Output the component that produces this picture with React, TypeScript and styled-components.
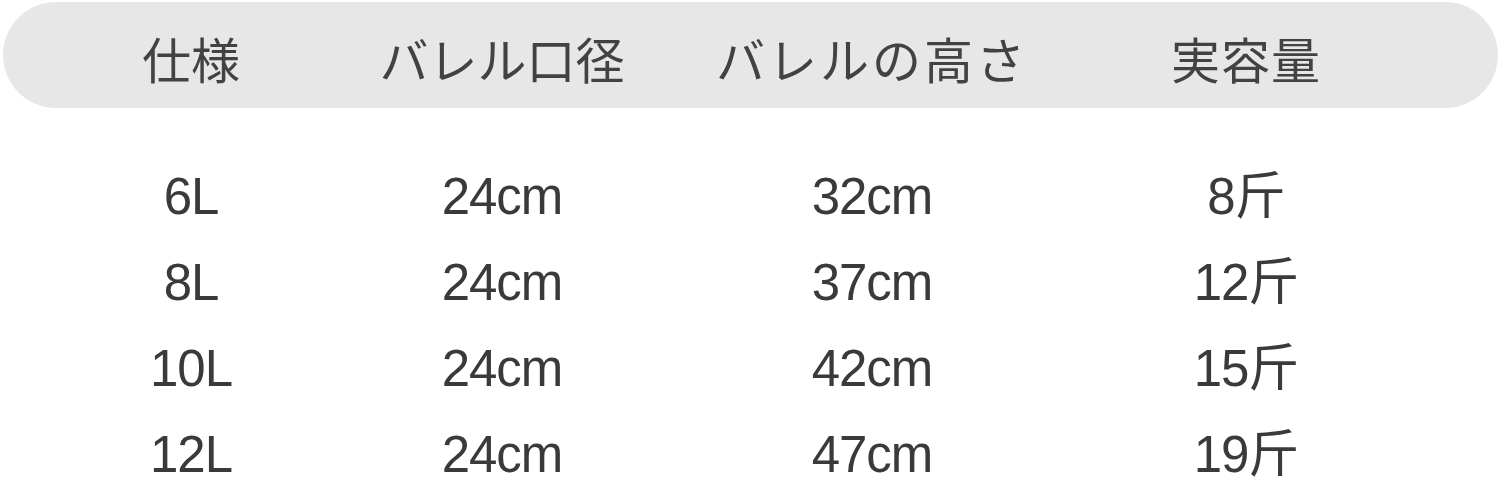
import React from "react";
import styled, { createGlobalStyle } from "styled-components";

const Global = createGlobalStyle`
  html, body { margin: 0; padding: 0; background: #ffffff; }
  body { width: 1500px; height: 481px; overflow: hidden; }
`;

const Page = styled.div`
  padding: 2px 2px 0 3px;
  box-sizing: border-box;
  width: 1500px;
`;

const cols = "376px 246px 494px 254px 1fr";

const HeaderBar = styled.div`
  display: grid;
  grid-template-columns: ${cols};
  align-items: center;
  height: 106px;
  border-radius: 53px;
  background: #e7e7e7;
`;

const HeadCell = styled.div<{ $spacing?: number }>`
  text-align: center;
  font-family: "Noto Sans CJK JP", "Noto Sans", sans-serif;
  font-size: 49px;
  line-height: 1;
  color: #424242;
  padding-top: 4px;
  letter-spacing: ${(p) => p.$spacing ?? 0}px;
`;

const Body = styled.div`
  display: flex;
  flex-direction: column;
  padding-top: 45px;
`;

const Row = styled.div`
  display: grid;
  grid-template-columns: ${cols};
  align-items: center;
  height: 86px;
`;

const Cell = styled.div`
  text-align: center;
  font-family: "Liberation Sans", "Noto Sans CJK SC", sans-serif;
  font-size: 51px;
  line-height: 1;
  color: #3a3a3a;
  letter-spacing: -1px;
`;

const headers: [string, number][] = [
  ["仕様", 0],
  ["バレル口径", 0],
  ["バレルの高さ", 3],
  ["実容量", 1],
];
const rows = [
  ["6L", "24cm", "32cm", "8斤"],
  ["8L", "24cm", "37cm", "12斤"],
  ["10L", "24cm", "42cm", "15斤"],
  ["12L", "24cm", "47cm", "19斤"],
];

export default function App() {
  return (
    <Page>
      <Global />
      <HeaderBar>
        {headers.map(([h, s]) => (
          <HeadCell key={h} $spacing={s}>
            {h}
          </HeadCell>
        ))}
      </HeaderBar>
      <Body>
        {rows.map((r, i) => (
          <Row key={i}>
            {r.map((c, j) => (
              <Cell key={j}>{c}</Cell>
            ))}
          </Row>
        ))}
      </Body>
    </Page>
  );
}
